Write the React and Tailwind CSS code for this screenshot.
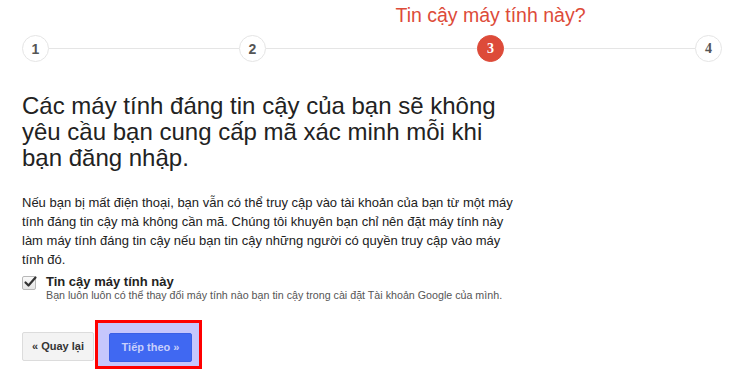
import React from "react";

const sans = { fontFamily: '"Liberation Sans", Arial, sans-serif' };

function Circle({ n, active, serif }) {
  return (
    <div
      className={
        "w-[27px] h-[27px] shrink-0 rounded-full flex items-center justify-center text-[14px] font-bold leading-none " +
        (active
          ? "bg-[#dd4b39] border border-[#dd4b39] text-white"
          : "bg-white border border-[#e5e5e5] text-[#555]")
      }
      style={{
        fontFamily: serif
          ? '"Liberation Serif", "Times New Roman", serif'
          : '"Liberation Sans", Arial, sans-serif',
      }}
    >
      {n}
    </div>
  );
}

function Line({ w }) {
  return <div className={"h-px bg-[#e5e5e5] shrink-0 " + w} />;
}

export default function App() {
  return (
    <div
      className="w-[737px] h-[370px] bg-white overflow-hidden pl-[22px] text-[#222]"
      style={sans}
    >
      {/* Stepper */}
      <div className="flex items-center mt-[35px]">
        <Circle n="1" />
        <Line w="w-[190px]" />
        <Circle n="2" />
        <Line w="w-[211px]" />
        <div className="relative">
          <div className="absolute bottom-full left-1/2 -translate-x-1/2 mb-[9px] whitespace-nowrap text-[19.5px] leading-[22px] text-[#dd4b39]">
            Tin cậy máy tính này?
          </div>
          <Circle n="3" active serif />
        </div>
        <Line w="w-[191px]" />
        <Circle n="4" serif />
      </div>

      {/* Heading */}
      <h1 className="mt-[31px] text-[24px] leading-[26px] font-normal text-[#222]">
        Các máy tính đáng tin cậy của bạn sẽ không
        <br />
        yêu cầu bạn cung cấp mã xác minh mỗi khi
        <br />
        bạn đăng nhập.
      </h1>

      {/* Paragraph */}
      <p className="mt-[22px] text-[13px] leading-[19px] text-[#222] whitespace-nowrap">
        Nếu bạn bị mất điện thoại, bạn vẫn có thể truy cập vào tài khoản của bạn từ một máy
        <br />
        tính đáng tin cậy mà không cần mã. Chúng tôi khuyên bạn chỉ nên đặt máy tính này
        <br />
        làm máy tính đáng tin cậy nếu bạn tin cậy những người có quyền truy cập vào máy
        <br />
        tính đó.
      </p>

      {/* Checkbox */}
      <div className="flex items-start mt-[6px]">
        <div className="mt-[1px] w-[14px] h-[14px] shrink-0 relative rounded-[2px] border border-[#b8b8b8] bg-gradient-to-b from-[#fafafa] to-[#e6e6e6]">
          <svg
            className="absolute -top-[2px] left-0"
            width="15"
            height="15"
            viewBox="0 0 15 15"
          >
            <path
              d="M2.5 7.5 L5.5 10.5 L12.5 2.5"
              fill="none"
              stroke="#333"
              strokeWidth="2.2"
              strokeLinecap="round"
              strokeLinejoin="round"
            />
          </svg>
        </div>
        <div className="ml-[10px]">
          <div className="text-[13px] leading-[14px] font-bold text-[#222]">
            Tin cậy máy tính này
          </div>
          <div className="text-[10.7px] leading-[12px] text-[#555] whitespace-nowrap">
            Bạn luôn luôn có thể thay đổi máy tính nào bạn tin cậy trong cài đặt Tài khoản Google của mình.
          </div>
        </div>
      </div>

      {/* Buttons */}
      <div className="flex items-start mt-[19px]">
        <button className="mt-[12px] w-[72px] h-[29px] rounded-[2px] border border-[#dcdcdc] bg-[#f3f3f3] text-[11px] font-bold text-[#333] flex items-center justify-center">
          « Quay lại
        </button>
        <div className="ml-[1px] border-[3px] border-[#ff0000] bg-[#c6c6fc] pl-[11px] pr-[7px] pt-[10px] pb-[4px]">
          <button className="w-[83px] h-[29px] rounded-[2px] border border-[#3a5fe6] bg-[#4068f2] text-[11px] font-bold text-[#c8cffb] flex items-center justify-center">
            Tiếp theo »
          </button>
        </div>
      </div>
    </div>
  );
}
